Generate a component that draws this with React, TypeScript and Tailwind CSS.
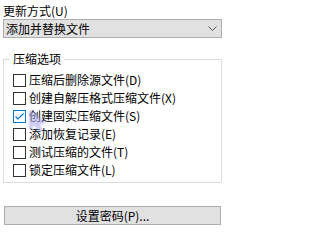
import React from "react";

const options = [
  { label: "压缩后删除源文件(D)", checked: false },
  { label: "创建自解压格式压缩文件(X)", checked: false },
  { label: "创建固实压缩文件(S)", checked: true },
  { label: "添加恢复记录(E)", checked: false },
  { label: "测试压缩的文件(T)", checked: false },
  { label: "锁定压缩文件(L)", checked: false },
];

function Checkbox({ checked }: { checked: boolean }) {
  return (
    <span
      className={`w-[13px] h-[13px] shrink-0 border bg-white flex items-center justify-center ${
        checked ? "border-[#0078d7]" : "border-[#333333]"
      }`}
    >
      {checked && (
        <svg width="11" height="11" viewBox="0 0 11 11">
          <path d="M1.5 5.5 L4 8 L9.5 2.5" fill="none" stroke="#0078d7" strokeWidth="1.2" />
        </svg>
      )}
    </span>
  );
}

export default function App() {
  return (
    <div
      className="relative w-[233px] h-[246px] bg-white text-black text-[12px] leading-[14px] overflow-hidden"
      style={{ fontFamily: '"Noto Sans CJK SC", "Liberation Sans", sans-serif' }}
    >
      <div className="pt-[4px] pl-[3px]">更新方式(U)</div>

      {/* update mode dropdown */}
      <div className="mt-[1px] ml-[3px] w-[219px] h-[19px] border border-[#adadad] bg-[#e1e1e1] flex items-center justify-between pl-[2px] pr-[4px]">
        <span>添加并替换文件</span>
        <svg width="9" height="5" viewBox="0 0 9 5">
          <path d="M0.5 0.5 L4.5 4.5 L8.5 0.5" fill="none" stroke="#555555" strokeWidth="1" />
        </svg>
      </div>

      {/* compression options */}
      <fieldset className="mt-[14px] ml-[3px] w-[219px] border border-[#dcdcdc] pl-[6px] pr-[4px] pb-[3px]">
        <legend className="px-[3px]">压缩选项</legend>
        <div className="mt-[5px] pl-[3px] flex flex-col">
          {options.map((o) => (
            <div key={o.label} className="h-[18px] flex items-center gap-[3px]">
              <Checkbox checked={o.checked} />
              <span>{o.label}</span>
            </div>
          ))}
        </div>
      </fieldset>

      <button className="mt-[23px] ml-[4px] w-[217px] h-[19px] border border-[#adadad] bg-[#e1e1e1] flex items-center justify-center">
        设置密码(P)...
      </button>

      {/* mouse cursor */}
      <svg
        className="absolute left-[28px] top-[109px] opacity-60"
        width="22"
        height="26"
        viewBox="0 0 22 26"
        style={{ filter: "blur(1px)" }}
      >
        <path d="M2 1 L2 20 L7 15 L11 23 L14 21 L10 14 L17 14 Z" fill="#b4b0ee" stroke="#7c74dc" strokeWidth="1" />
      </svg>
    </div>
  );
}
